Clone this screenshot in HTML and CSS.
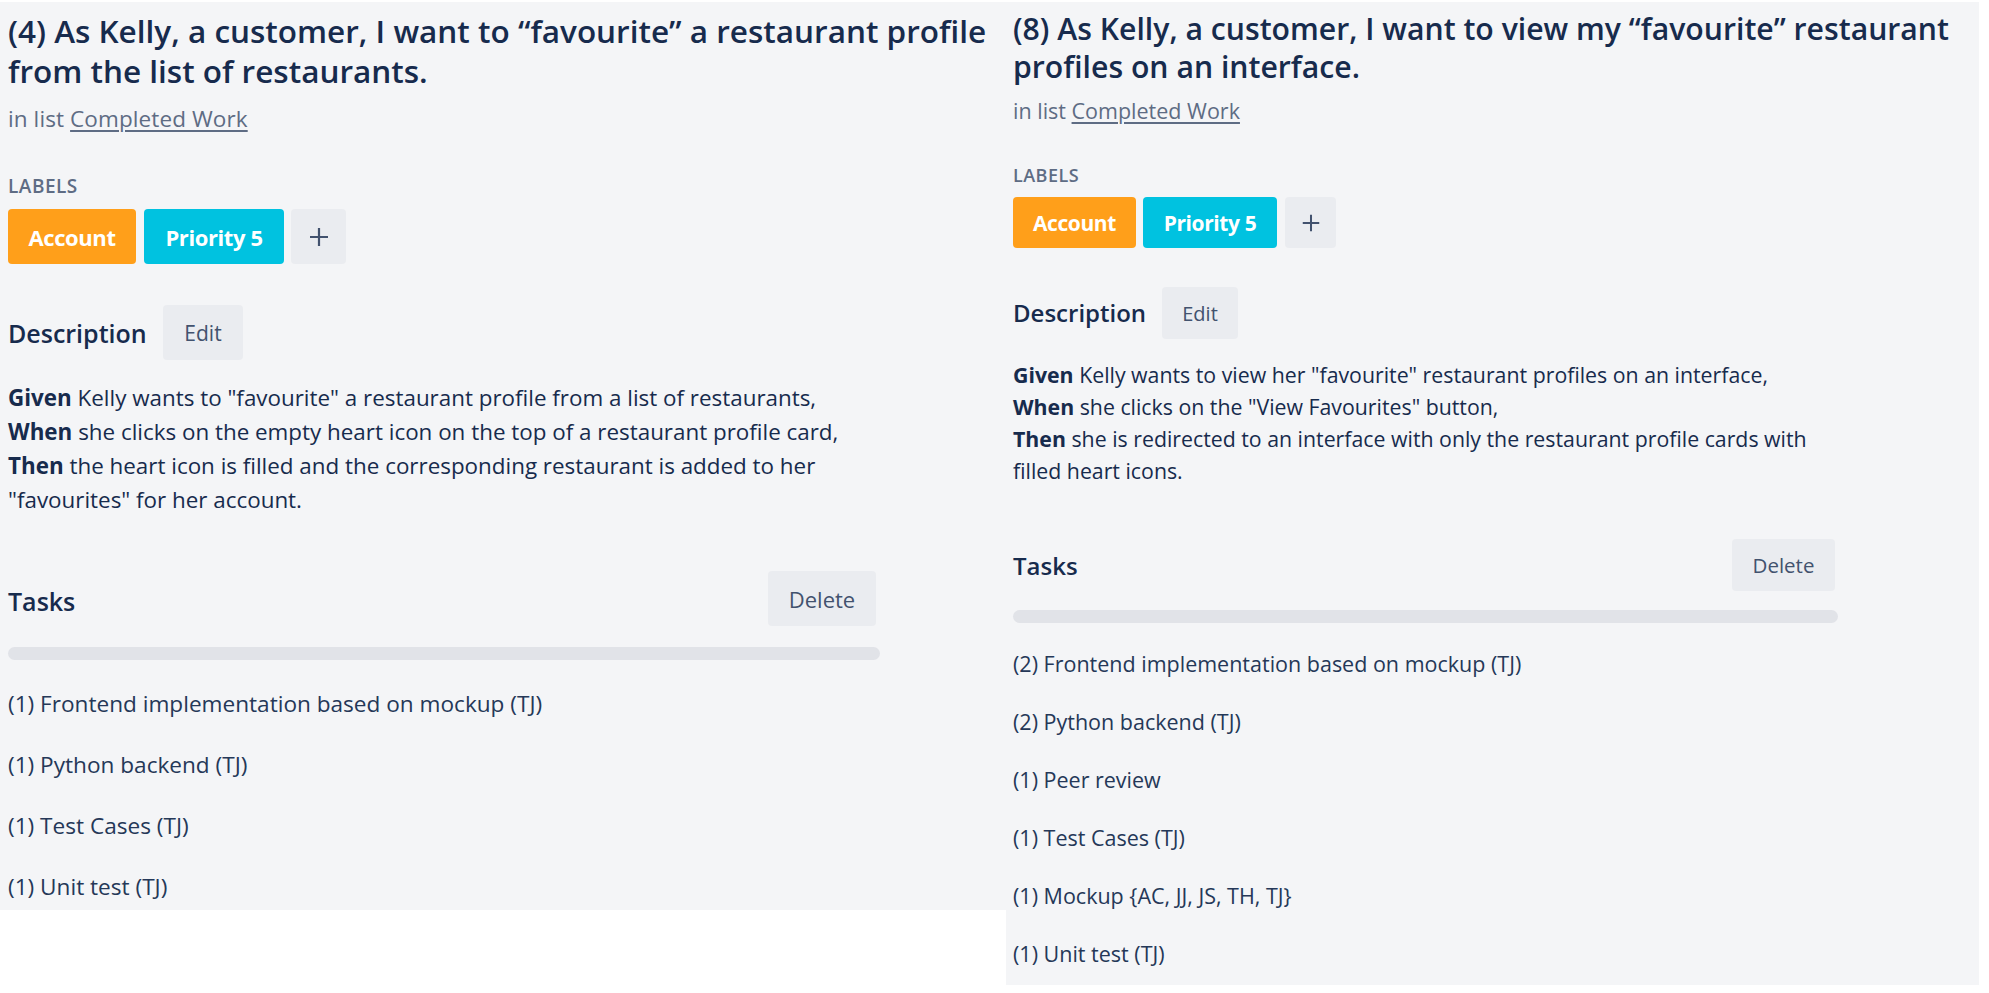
FILE: index.html
```html
<!DOCTYPE html>
<html lang="en">
<head>
<meta charset="utf-8">
<title>Cards</title>
<link rel="stylesheet" href="styles.css">
</head>
<body>
<div class="page">
  <section class="panel left">
    <h1 class="title">(4) As Kelly, a customer, I want to “favourite” a restaurant profile<br>from the list of restaurants.</h1>
    <p class="inlist">in list <a href="#">Completed Work</a></p>
    <h3 class="labels-h">LABELS</h3>
    <div class="chips">
      <span class="chip orange">Account</span>
      <span class="chip sky">Priority 5</span>
      <span class="chip add"><svg viewBox="0 0 24 24" class="plus"><path d="M12 3v18M3 12h18"/></svg></span>
    </div>
    <div class="row desc-row">
      <h2 class="heading">Description</h2>
      <button class="btn edit">Edit</button>
    </div>
    <p class="desc"><b>Given</b> Kelly wants to "favourite" a restaurant profile from a list of restaurants,<br><b>When</b> she clicks on the empty heart icon on the top of a restaurant profile card,<br><b>Then</b> the heart icon is filled and the corresponding restaurant is added to her<br>"favourites" for her account.</p>
    <div class="row tasks-row">
      <h2 class="heading tasks-h">Tasks</h2>
      <button class="btn delete">Delete</button>
    </div>
    <div class="bar"></div>
    <ul class="tasks">
      <li>(1) Frontend implementation based on mockup (TJ)</li>
      <li>(1) Python backend (TJ)</li>
      <li>(1) Test Cases (TJ)</li>
      <li>(1) Unit test (TJ)</li>
    </ul>
  </section>
  <section class="panel right">
    <h1 class="title">(8) As Kelly, a customer, I want to view my “favourite” restaurant<br>profiles on an interface.</h1>
    <p class="inlist">in list <a href="#">Completed Work</a></p>
    <h3 class="labels-h">LABELS</h3>
    <div class="chips">
      <span class="chip orange">Account</span>
      <span class="chip sky">Priority 5</span>
      <span class="chip add"><svg viewBox="0 0 24 24" class="plus"><path d="M12 3v18M3 12h18"/></svg></span>
    </div>
    <div class="row desc-row">
      <h2 class="heading">Description</h2>
      <button class="btn edit">Edit</button>
    </div>
    <p class="desc"><b>Given</b> Kelly wants to view her "favourite" restaurant profiles on an interface,<br><b>When</b> she clicks on the "View Favourites" button,<br><b>Then</b> she is redirected to an interface with only the restaurant profile cards with<br>filled heart icons.</p>
    <div class="row tasks-row">
      <h2 class="heading tasks-h">Tasks</h2>
      <button class="btn delete">Delete</button>
    </div>
    <div class="bar"></div>
    <ul class="tasks">
      <li>(2) Frontend implementation based on mockup (TJ)</li>
      <li>(2) Python backend (TJ)</li>
      <li>(1) Peer review</li>
      <li>(1) Test Cases (TJ)</li>
      <li>(1) Mockup {AC, JJ, JS, TH, TJ}</li>
      <li>(1) Unit test (TJ)</li>
    </ul>
  </section>
</div>
</body>
</html>
```

FILE: styles.css
```css
* { box-sizing: border-box; }
html, body { margin: 0; padding: 0; background: #ffffff; }
body {
  font-family: "Open Sans", "Noto Sans", "Liberation Sans", sans-serif;
  color: #172b4d;
}
.page {
  display: flex;
  align-items: flex-start;
  padding-top: 2px;
}
.panel {
  background: #f4f5f7;
  overflow: hidden;
}
h1, h2, h3, p, ul { margin: 0; padding: 0; }
ul { list-style: none; }
b { font-weight: 700; }

.title { font-weight: 600; white-space: nowrap; }
.inlist { color: #5e6c84; }
.inlist a { color: #5e6c84; text-decoration: underline; text-underline-offset: 3px; }
.labels-h { color: #5e6c84; font-weight: 600; }
.chips { display: flex; }
.chip {
  display: flex; align-items: center; justify-content: center;
  border-radius: 4px; color: #fff; font-weight: 700;
}
.chip.orange { background: #ff9f1a; }
.chip.sky { background: #00c2e0; }
.chip.add { background: #eaecf0; }
.plus { fill: none; stroke: #42526e; stroke-width: 2.2; }
.row { display: flex; align-items: center; }
.heading { font-weight: 600; }
.btn {
  border: 0; border-radius: 4px; background: #eaecf0; color: #42526e;
  font-family: inherit; padding: 0;
}
.tasks-row { justify-content: space-between; }
.bar { background: #e1e3e8; border-radius: 7px; }
.desc { white-space: nowrap; }
.tasks li { white-space: nowrap; color: #253858; }

/* ---------- left card ---------- */
.left { width: 1006px; height: 908px; padding: 9px 0 0 8px; }
.left .title { font-size: 31.5px; line-height: 40px; letter-spacing: 0; }
.left .inlist { font-size: 22.5px; line-height: 30px; margin-top: 13px; letter-spacing: 0.1px; }
.left .labels-h { font-size: 19px; line-height: 24px; margin-top: 40px; letter-spacing: 0.5px; }
.left .chips { margin-top: 11px; gap: 8px; }
.left .chip { height: 55px; font-size: 22px; letter-spacing: -0.4px; }
.left .chip.orange { width: 128px; }
.left .chip.sky { width: 140px; }
.left .chip.add { width: 55px; margin-left: -1px; }
.left .plus { width: 24px; height: 24px; }
.left .desc-row { margin-top: 41px; height: 55px; }
.left .heading { font-size: 25px; line-height: 30px; letter-spacing: 0; }
.left .desc-row .heading { width: 155px; }
.left .edit { width: 80px; height: 55px; font-size: 21px; }
.left .desc { font-size: 22.4px; line-height: 34px; margin-top: 21px; letter-spacing: 0; }
.left .tasks-row { margin-top: 54px; height: 55px; width: 868px; }
.left .tasks-h { margin-top: 4px; }
.left .delete { width: 108px; height: 55px; font-size: 22px; }
.left .bar { margin-top: 21px; height: 13px; width: 872px; }
.left .tasks { margin-top: 13px; }
.left .tasks li { font-size: 22.6px; line-height: 61px; letter-spacing: 0; }

/* ---------- right card ---------- */
.right { width: 973px; height: 983px; padding: 8px 0 0 7px; }
.right .title { font-size: 30.2px; line-height: 38px; letter-spacing: 0; }
.right .inlist { font-size: 21.5px; line-height: 28px; margin-top: 11px; letter-spacing: 0; }
.right .labels-h { font-size: 18px; line-height: 22px; margin-top: 39px; letter-spacing: 0.45px; }
.right .chips { margin-top: 11px; gap: 7px; }
.right .chip { height: 51px; font-size: 21px; letter-spacing: -0.4px; }
.right .chip.orange { width: 123px; }
.right .chip.sky { width: 134px; }
.right .chip.add { width: 51px; margin-left: 1px; }
.right .plus { width: 22px; height: 22px; }
.right .desc-row { margin-top: 39px; height: 52px; }
.right .heading { font-size: 24px; line-height: 30px; letter-spacing: 0; }
.right .desc-row .heading { width: 149px; }
.right .edit { width: 76px; height: 52px; font-size: 20px; }
.right .desc { font-size: 21.3px; line-height: 32px; margin-top: 20px; letter-spacing: 0; }
.right .tasks-row { margin-top: 52px; height: 52px; width: 822px; }
.right .tasks-h { margin-top: 2px; }
.right .delete { width: 103px; height: 52px; font-size: 20.5px; }
.right .bar { margin-top: 19px; height: 13px; width: 825px; }
.right .tasks { margin-top: 12px; }
.right .tasks li { font-size: 21.5px; line-height: 58px; letter-spacing: 0; }
```
